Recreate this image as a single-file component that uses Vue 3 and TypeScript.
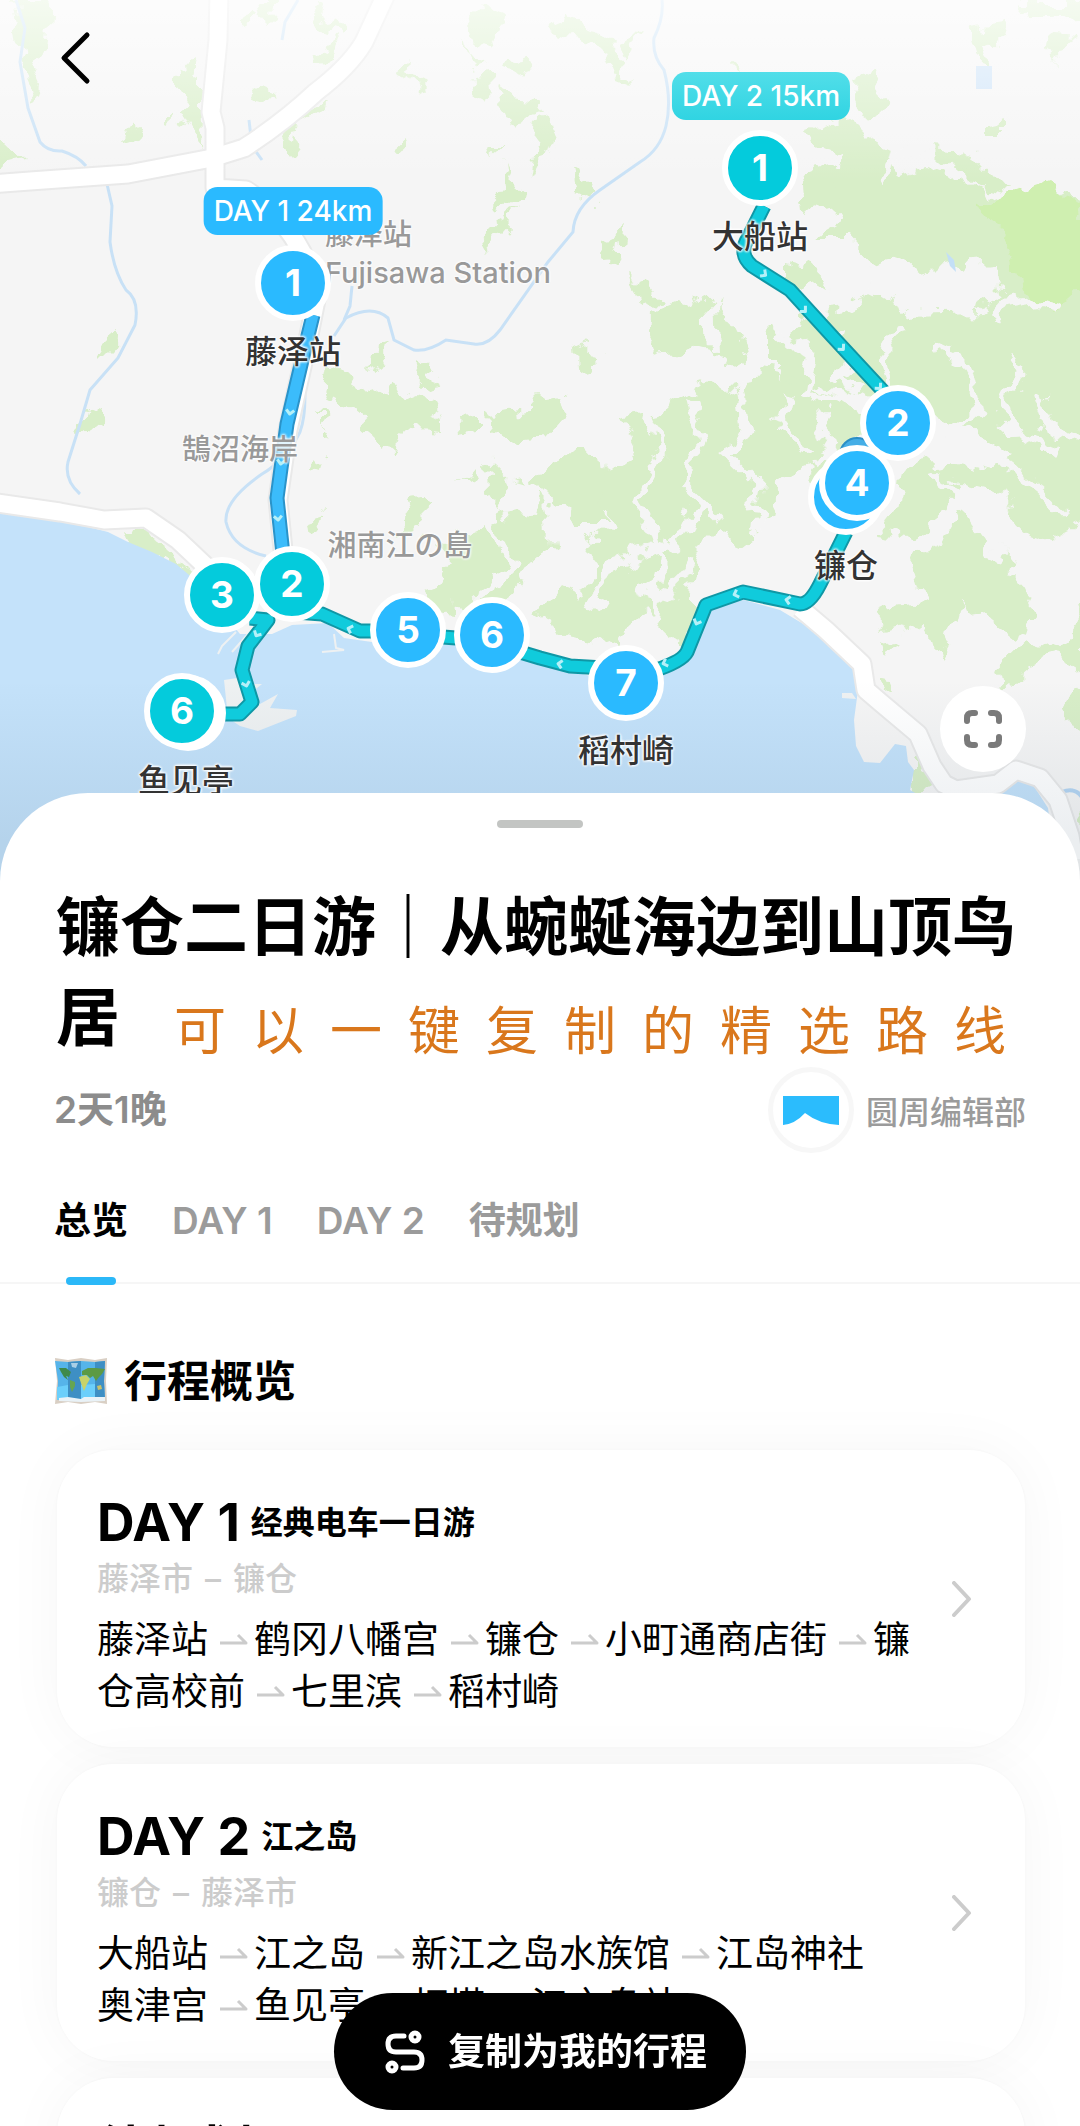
<script setup lang="ts">
import { ref } from 'vue'

type Tone = 'blue' | 'teal'

interface Pin {
  x: number
  y: number
  tone: Tone
  text?: string
  plain?: boolean
}

interface Label {
  x: number
  y: number
  text: string
}

interface Stop {
  name: string
  joined?: boolean
}

interface Day {
  title: string
  name: string
  from: string
  to: string
  stops: Stop[]
}

const MAP_W = 1080
const MAP_H = 900

const at = (x: number, y: number) => ({
  left: `${(x / MAP_W) * 100}%`,
  top: `${(y / MAP_H) * 100}%`,
})

const forests: string[] = [
  '14,0 50,0 46,50 36,74 42,88 40,105 33,108 25,72 20,45',
  '-8,130 8,146 24,160 -8,168',
  '183,66 201,70 201,110 200,147 193,138 181,118 188,110 178,88',
  '120,146 126,128 136,122 142,138 130,143',
  '240,16 255,6 262,15 250,29 240,24',
  '262,0 278,0 276,18 266,26',
  '315,0 325,15 342,28 342,36 325,30 312,12',
  '312,55 335,40 340,48 322,68 313,66',
  '257,91 268,85 277,92 265,101',
  '165,112 171,112 170,121 165,120',
  '279,130 300,133 298,148 290,157 280,142',
  '290,122 328,100 325,111 300,127',
  '388,148 402,138 406,147 396,152',
  '468,26 484,6 500,14 497,36 488,48 480,35',
  '462,40 466,58 486,60 474,66 462,54',
  '503,57 530,53 532,66 515,72 500,69',
  '474,75 488,73 489,90 485,106 478,92',
  '498,90 510,96 530,98 541,112 520,120 512,130 504,110',
  '484,144 502,144 488,156',
  '500,163 510,180 522,190 520,201 506,208 494,203 504,192',
  '400,74 410,60 408,78 426,84 428,92 404,80',
  '524,208 508,222 494,238 478,256 482,238 496,222',
  '98,345 112,332 123,332 112,352 104,360',
  '84,408 104,412 100,434 80,430',
  '325,364 345,372 372,390 384,398 396,380 405,398 425,390 440,420 440,432 412,430 384,452 372,430 350,412 332,398 320,392',
  '374,352 388,347 372,374',
  '410,357 424,370 442,382 424,385 414,374',
  '462,418 480,416 480,430 464,433',
  '490,415 540,410 545,436 510,440 492,428',
  '310,460 326,465 325,472 312,470',
  '320,410 326,414 320,432 328,436 320,440',
  '308,520 326,514 320,530 310,536',
  '460,486 474,470 476,478',
  '484,462 504,480 526,478 548,500 552,548 530,562 505,600 486,612 444,606 420,592 436,586 452,562 436,544 468,532 502,516 508,502 486,492',
  '400,520 412,500 425,498 424,530 402,540',
  '124,528 150,540 168,552 192,572 184,576 158,560 130,546',
  '566,20 576,12 584,30 602,34 612,45 620,60 629,82 614,76 604,50 574,38 548,34 552,26',
  '620,46 640,30 634,48 626,60',
  '570,170 590,180 600,196 590,202 574,196',
  '538,118 550,116 558,148 540,160 530,180',
  '603,240 625,228 622,246 612,264 602,256',
  '655,308 675,300 700,306 715,298 730,320 738,336 746,366 714,352 690,346 660,355 654,334',
  '634,278 648,284 662,300 642,306',
  '577,350 588,345 600,360 578,367',
  '735,60 742,66 736,70',
  '968,26 1012,20 1006,40 986,46 992,66 974,60',
  '1050,34 1072,36 1066,54 1056,66 1048,50',
  '1020,0 1080,0 1078,24 1062,10 1030,12',
  '850,86 872,74 888,98 882,112 866,118',
  '992,124 1002,122 1002,132 992,132',
  '806,132 846,118 868,140 886,148 898,178 930,170 972,186 1000,202 1048,184 1090,204 1090,440 1030,470 970,430 900,410 850,392 790,380 772,370 772,338 800,318 846,312 876,296 874,262 850,236 812,236 844,218 846,208 820,212 800,204 814,172 838,170 840,152 812,146',
  '782,262 812,270 826,286 800,290 782,276',
  '802,178 836,166 838,202 804,216',
  '928,146 950,148 978,158 1006,190 974,186 946,164',
  '620,418 660,410 690,390 716,382 738,398 760,372 800,380 840,400 870,420 850,450 838,470 846,500 818,500 806,470 780,480 770,520 744,540 720,530 700,550 690,600 712,620 690,640 664,630 640,606 616,650 600,640 560,630 540,616 560,590 580,600 600,570 588,540 612,520 594,500 602,470 640,460',
  '530,400 560,396 566,420 548,440 530,420',
  '536,480 560,450 600,452 606,520 570,520 556,500',
  '905,470 950,462 990,470 1030,440 1080,430 1090,520 1050,540 1020,530 1000,490 960,480 950,510 910,540 880,536 900,510',
  '910,556 938,544 958,510 990,540 1020,580 1040,620 1010,640 960,600 950,640 938,662 926,620 900,630 876,634 890,606 924,600',
  '882,646 900,642 892,660',
  '876,676 892,680 896,690 880,692',
  '1030,640 1060,650 1090,610 1090,680 1060,656 1030,664 1000,690 996,670',
  '1058,704 1086,694 1090,730 1060,718',
  '914,762 932,772 936,788 914,790',
  '1076,820 1090,810 1090,880 1078,860',
]

const valleys: string[] = [
  'M868 262 L892 256 L930 270 L996 262 L1002 296 L980 312 L910 314 L870 290Z',
  'M500 478 L540 484 L536 520 L512 518Z',
]

const valleyLines: string[] = [
  'M780 330 L812 356 L806 392 L838 402',
  'M838 330 L852 350 L838 378 L860 392',
  'M900 330 L884 352 L892 396 L920 432',
  'M932 344 L966 360 L978 410 L952 434',
  'M1010 356 L1020 372 L1000 412 L1030 440 L1060 452',
  'M990 318 L1000 306 L1040 300 L1060 306',
  'M712 300 L714 350',
  'M880 176 L910 152 L924 146',
  'M640 400 L660 450 L640 500 L660 560 L650 640',
  'M690 400 L700 440 L680 480 L720 520',
  'M740 390 L746 430 L730 460 L760 490 L756 530',
  'M790 390 L780 430 L806 450',
  'M590 610 L620 560 L680 540 L700 500',
  'M640 590 L670 600 L690 560',
  'M1000 460 L1040 490 L1070 520',
  'M940 470 L960 500 L1000 560',
  'M820 410 L830 440 L812 470',
  'M490 520 L510 570 L476 596',
  'M1040 400 L1050 430 L1080 440',
]

const rivers: string[] = [
  'M16 0 L25 28 L20 62 L28 108 L40 142 Q48 152 62 151 Q78 156 86 166',
  'M107 184 L112 206 L110 242 Q114 272 126 290 Q140 300 135 325 L118 358 L90 390 L80 424 L68 462 Q64 480 80 494',
  'M662 0 Q664 18 654 38 Q652 56 664 70 Q672 100 666 126 Q660 150 640 162 L600 190 Q574 208 573 232 L548 262 L500 330 Q488 346 474 344 L446 340 Q428 352 414 350 L394 340 L388 318 Q372 304 346 318 L334 336',
  'M352 286 L350 306 L344 320',
  'M303 370 Q308 410 300 432 Q286 460 262 474 Q224 500 226 522 Q232 548 266 556',
  'M298 0 L285 22 L282 40',
  'M249 120 L252 146 L262 160',
]

const roads: string[] = [
  'M-10 184 L30 181 L128 174 L212 158 L244 148 Q284 122 316 92 Q350 66 364 42 L388 -10',
  'M219 -10 L218 40 L211 112 L215 128 L215 188 L246 190 Q280 212 302 252 L318 290 L308 340 L288 430 L278 500 L284 560',
  'M-10 502 L60 512 L104 520 L146 518 L178 540 L214 574 L300 600',
  'M800 608 L826 630 L862 664 L866 690 L880 702 L918 734 L932 766 L944 784 L956 790 L998 784 L1016 770 L1040 778 L1058 800 L1070 836 L1074 860',
]

const dayOneRoute = 'M313 315 L304 352 L287 424 L277 498 L284 564'
const dayTwoRoutes: string[] = [
  'M764 206 L748 238 Q738 254 752 266 L790 290 L832 336 L884 392',
  'M846 532 L820 584 Q810 604 800 604 L743 592 L706 605 L687 652 Q682 662 650 672',
  'M604 668 L570 666 L540 658 L500 646',
  'M456 638 L430 636',
  'M402 631 L360 631 L322 614 L296 612',
  'M250 618 L268 620 L248 646 L242 670 L252 702 L240 714 L222 714',
]

const routeTicks = [
  { x: 290, y: 412, r: 98 },
  { x: 281, y: 462, r: 98 },
  { x: 278, y: 518, r: 85 },
  { x: 764, y: 274, r: 36 },
  { x: 804, y: 310, r: 45 },
  { x: 842, y: 348, r: 47 },
  { x: 879, y: 387, r: 47 },
  { x: 788, y: 600, r: 190 },
  { x: 736, y: 594, r: 160 },
  { x: 697, y: 622, r: 112 },
  { x: 665, y: 663, r: 160 },
  { x: 560, y: 664, r: 190 },
  { x: 350, y: 629, r: 200 },
  { x: 257, y: 634, r: 120 },
  { x: 246, y: 684, r: 75 },
]

const pins: Pin[] = [
  { x: 293, y: 283, tone: 'blue', text: '1' },
  { x: 760, y: 168, tone: 'teal', text: '1' },
  { x: 846, y: 497, tone: 'blue' },
  { x: 857, y: 483, tone: 'blue', text: '4' },
  { x: 898, y: 423, tone: 'blue', text: '2' },
  { x: 222, y: 595, tone: 'teal', text: '3' },
  { x: 292, y: 584, tone: 'teal', text: '2' },
  { x: 408, y: 630, tone: 'blue', text: '5' },
  { x: 492, y: 635, tone: 'blue', text: '6' },
  { x: 626, y: 683, tone: 'blue', text: '7' },
  { x: 188, y: 713, tone: 'teal', plain: true },
  { x: 182, y: 711, tone: 'teal', text: '6' },
]

const placeLabels: Label[] = [
  { x: 293, y: 352, text: '藤泽站' },
  { x: 760, y: 237, text: '大船站' },
  { x: 846, y: 566, text: '镰仓' },
  { x: 626, y: 751, text: '稻村崎' },
  { x: 186, y: 781, text: '鱼见亭' },
]

const baseLabels: Label[] = [
  { x: 240, y: 450, text: '鵠沼海岸' },
  { x: 400, y: 546, text: '湘南江の島' },
]

const distances = [
  { x: 293, y: 211, tone: 'blue' as Tone, text: 'DAY 1 24km' },
  { x: 761, y: 96, tone: 'teal' as Tone, text: 'DAY 2 15km' },
]

const note = Array.from('可以一键复制的精选路线')

const tabs = ['总览', 'DAY 1', 'DAY 2', '待规划']
const activeTab = ref('总览')

const days: Day[] = [
  {
    title: 'DAY 1',
    name: '经典电车一日游',
    from: '藤泽市',
    to: '镰仓',
    stops: [
      { name: '藤泽站' },
      { name: '鹤冈八幡宫' },
      { name: '镰仓' },
      { name: '小町通商店街' },
      { name: '镰仓高校前' },
      { name: '七里滨' },
      { name: '稻村崎' },
    ],
  },
  {
    title: 'DAY 2',
    name: '江之岛',
    from: '镰仓',
    to: '藤泽市',
    stops: [
      { name: '大船站' },
      { name: '江之岛' },
      { name: '新江之岛水族馆' },
      { name: '江岛神社' },
      { name: '奥津宫', joined: true },
      { name: '鱼见亭' },
      { name: '灯塔' },
      { name: '江之岛站' },
    ],
  },
  { title: '待规划', name: '', from: '镰仓', to: '藤泽市', stops: [{ name: '大船站' }] },
]
</script>

<template>
  <div class="app">
    <section class="map" aria-label="路线地图">
      <svg class="map-art" viewBox="0 0 1080 900" preserveAspectRatio="xMidYMin slice" aria-hidden="true">
        <defs>
          <filter id="rough" x="-5%" y="-5%" width="110%" height="110%">
            <feTurbulence type="fractalNoise" baseFrequency="0.045" numOctaves="3" seed="11" />
            <feDisplacementMap in="SourceGraphic" scale="30" xChannelSelector="R" yChannelSelector="G" />
          </filter>
          <linearGradient id="fade" x1="0" y1="0" x2="0" y2="1">
            <stop offset="0" stop-color="#fff" stop-opacity="0.75" />
            <stop offset="1" stop-color="#fff" stop-opacity="0" />
          </linearGradient>
          <linearGradient id="shade" x1="0" y1="0" x2="0" y2="1">
            <stop offset="0" stop-color="#1d3d5c" stop-opacity="0" />
            <stop offset="1" stop-color="#1d3d5c" stop-opacity="0.09" />
          </linearGradient>
        </defs>

        <rect width="1080" height="900" fill="#f5f5f5" />

        <g filter="url(#rough)">
          <polygon v-for="(p, i) in forests" :key="i" :points="p" fill="#d8eec8" />
          <path d="M984 204 L1048 182 L1084 206 L1090 280 L1056 310 L1020 286 L1010 246Z" fill="#cfefb0" />
          <path v-for="(d, i) in valleys" :key="i" :d="d" fill="#f5f5f5" />
          <path v-for="(d, i) in valleyLines" :key="i" :d="d" fill="none" stroke="#f5f5f5" stroke-width="8" />
        </g>

        <rect x="976" y="66" width="16" height="23" fill="#cfe4f8" />
        <path d="M946 252 l8 8 l2 12 l-6 -6z" fill="#c3dff6" />
        <path v-for="(d, i) in rivers" :key="i" :d="d" fill="none" stroke="#c8e1f6" stroke-width="3" />

        <path
          fill="#c4e2fa"
          d="M-4 512 L60 520 L108 532 L120 538 L128 542 L152 552 L176 564 L200 584 L240 634 L272 634 L292 625 L328 623 L344 638 L372 642 L440 640 L500 650 L540 662 L590 676 L650 676 L684 662 L698 640 L704 614 L720 604 L744 600 L780 610 L800 622 L824 636 L852 666 L858 690 L854 720 L856 746 L864 762 L880 763 L895 744 L906 746 L908 762 L914 770 L910 790 L924 798 L960 790 L1000 782 L1016 772 L1030 780 L1048 808 L1060 900 L-4 900Z"
        />
        <path d="M1062 792 Q1076 786 1084 800 M1062 794 Q1062 808 1068 816 L1064 840" fill="none" stroke="#b5d5f2" stroke-width="4" />
        <path d="M842 693 l10 0 l4 6 l-14 -1z" fill="#eef1f2" />
        <path d="M224 680 L244 677 L250 684 L262 684 L252 692 L260 704 L278 694 L270 708 L297 710 L296 716 L258 731 L240 726 L228 718Z" fill="#eef1f2" />
        <path d="M236 632 l-14 14 l-4 8 M248 634 l-16 18 M334 634 l2 14 l8 2 l-22 2" fill="none" stroke="#eef1f2" stroke-width="2" />

        <path v-for="(d, i) in roads" :key="`c${i}`" :d="d" fill="none" stroke="#e9e9e9" stroke-width="21" stroke-linejoin="round" />
        <path v-for="(d, i) in roads" :key="`r${i}`" :d="d" fill="none" stroke="#fff" stroke-width="17" stroke-linejoin="round" />

        <rect width="1080" height="180" fill="url(#fade)" />
        <rect y="680" width="1080" height="160" fill="url(#shade)" />
        <rect y="840" width="1080" height="60" fill="#1d3d5c" fill-opacity="0.09" />

        <circle cx="857" cy="455" r="17" fill="#45aee6" stroke="#2b8fc6" stroke-width="2" />
        <g fill="none" stroke-linejoin="round">
          <path :d="dayOneRoute" stroke="#2a93c9" stroke-width="15" />
          <path :d="dayOneRoute" stroke="#3bbcfb" stroke-width="11" />
          <path v-for="(d, i) in dayTwoRoutes" :key="`b${i}`" :d="d" stroke="#0f97a5" stroke-width="15" />
          <path v-for="(d, i) in dayTwoRoutes" :key="`f${i}`" :d="d" stroke="#10cbdc" stroke-width="11" />
          <path
            v-for="(t, i) in routeTicks"
            :key="`t${i}`"
            d="M-2 -4 L2 0 L-2 4"
            :transform="`translate(${t.x} ${t.y}) rotate(${t.r})`"
            stroke="#b5f0f8"
            stroke-width="3"
          />
        </g>
      </svg>

      <span class="base-label station" :style="at(325, 254)">藤泽站<br />Fujisawa Station</span>
      <span v-for="l in baseLabels" :key="l.text" class="base-label centered" :style="at(l.x, l.y)">{{ l.text }}</span>
      <span v-for="l in placeLabels" :key="l.text" class="place-label centered" :style="at(l.x, l.y)">{{ l.text }}</span>
      <span v-for="(p, i) in pins" :key="i" class="pin centered" :class="[p.tone, { plain: p.plain }]" :style="at(p.x, p.y)">{{ p.text }}</span>
      <span v-for="d in distances" :key="d.text" class="distance centered" :class="d.tone" :style="at(d.x, d.y)">{{ d.text }}</span>

      <button class="back" type="button" aria-label="返回">
        <svg width="32" height="54" viewBox="0 0 32 54" aria-hidden="true">
          <path d="M27 4 L4 27 L27 50" fill="none" stroke="#000" stroke-width="5" stroke-linecap="round" stroke-linejoin="round" />
        </svg>
      </button>
      <button class="expand centered" type="button" aria-label="展开地图" :style="at(983, 729)">
        <svg width="38" height="38" viewBox="0 0 38 38" aria-hidden="true">
          <path
            d="M3 11 V8 Q3 3 8 3 H11 M27 3 H30 Q35 3 35 8 V11 M35 27 V30 Q35 35 30 35 H27 M11 35 H8 Q3 35 3 30 V27"
            fill="none"
            stroke="#7a7a7a"
            stroke-width="6"
            stroke-linecap="round"
          />
        </svg>
      </button>
    </section>

    <main class="sheet">
      <div class="handle"></div>
      <header class="intro">
        <h1>镰仓二日游｜从蜿蜒海边到山顶鸟居</h1>
        <p class="note" aria-label="可以一键复制的精选路线"><span v-for="(c, i) in note" :key="i">{{ c }}</span></p>
      </header>

      <div class="meta">
        <span class="length">2天1晚</span>
        <a class="author" href="#">
          <span class="avatar">
            <svg width="56" height="29" viewBox="0 0 56 29" aria-hidden="true">
              <path d="M0 0 H56 V29 Q36 28 22 17 Q12 28 0 29Z" fill="#2bbcfd" />
            </svg>
          </span>
          圆周编辑部
        </a>
      </div>

      <nav class="tabs">
        <button v-for="t in tabs" :key="t" type="button" :class="{ active: t === activeTab }" @click="activeTab = t">{{ t }}</button>
      </nav>

      <h2>
        <svg width="54" height="48" viewBox="0 0 54 48" aria-hidden="true">
          <path d="M1 1 L14 3 L27 1 L41 3 L53 1 L52 24 L53 47 L41 45 L27 47 L14 45 L1 47 L3 24Z" fill="#d9cfc4" />
          <path d="M1 4 L14 5 L27 4 L41 5 L51 4 L50 24 L51 43 L41 42 L27 43 L14 42 L3 43 L4 24Z" fill="#56b4ea" />
          <path d="M14 5 L27 4 V43 L14 42Z M41 5 L51 4 L50 24 L51 43 L41 42Z" fill="#3e8fc4" />
          <path d="M3 30 L14 28 V42 L3 43Z M27 28 L41 27 V42 L27 43Z" fill="#6bcffb" />
          <path d="M17 6 L24 6 L22 11 L18 10Z" fill="#a9cfe6" />
          <path d="M5 11 L12 11 L17 15 L15 20 L12 19 L14 23 L10 20 L7 15Z" fill="#3f8a4a" />
          <path d="M16 23 L21 25 L21 29 L18 35 L16 30Z" fill="#66a552" />
          <path d="M28 14 L34 11 L42 11 L51 12 L48 17 L45 20 L42 24 L39 19 L36 21 L33 18 L28 18Z" fill="#5c9a45" />
          <path d="M25 20 L32 18 L36 22 L33 27 L30 34 L27 26Z" fill="#c8d36a" />
          <path d="M43 29 L47 28 L48 32 L44 33Z" fill="#c8c26a" />
          <path d="M5 41 L14 40 L27 42 L30 40 L51 40 V44 L27 45 L5 44Z" fill="#e9f2f7" />
        </svg>
        行程概览
      </h2>

      <div class="cards">
        <a v-for="day in days" :key="day.title" class="card" href="#">
          <div class="card-body">
            <h3>{{ day.title }} <small>{{ day.name }}</small></h3>
            <p class="area"><span>{{ day.from }}</span><span>–</span><span>{{ day.to }}</span></p>
            <p class="route">
              <template v-for="(s, i) in day.stops" :key="s.name">
                <svg v-if="i > 0 && !s.joined" class="arrow" width="28" height="12" viewBox="0 0 28 12" aria-hidden="true">
                  <path d="M0 10 H26 L18 2" fill="none" stroke="#ccc" stroke-width="3" stroke-linejoin="round" />
                </svg>
                <template v-if="s.joined">{{ ' ' }}</template>
                <span :class="{ whole: s.joined }">{{ s.name }}</span>
              </template>
            </p>
          </div>
          <svg class="chevron" width="20" height="36" viewBox="0 0 20 36" aria-hidden="true">
            <path d="M2 2 L17 18 L2 34" fill="none" stroke="#ccc" stroke-width="4" stroke-linecap="round" stroke-linejoin="round" />
          </svg>
        </a>
      </div>
    </main>

    <div class="dock">
      <button class="copy" type="button">
        <svg width="40" height="44" viewBox="0 0 40 44" aria-hidden="true">
          <g fill="none" stroke="#fff" stroke-width="5" stroke-linecap="round">
            <path d="M19 6 H11 Q3 6 3 14 Q3 22 11 22 H29 Q37 22 37 30 Q37 38 29 38 H18" />
            <circle cx="30" cy="7" r="4" />
            <circle cx="7" cy="37" r="4" />
          </g>
        </svg>
        复制为我的行程
      </button>
    </div>
  </div>
</template>

<style>
body {
  margin: 0;
  background: #fff;
}
</style>

<style scoped>
.app {
  height: 100vh;
  overflow-y: auto;
  scrollbar-width: none;
  background: #fff;
  color: #000;
  font-family: Inter, 'Noto Sans CJK SC', sans-serif;
}

h1,
h2,
h3,
p {
  margin: 0;
}

a {
  color: inherit;
  text-decoration: none;
}

button {
  border: 0;
  padding: 0;
  background: none;
  font-family: inherit;
  color: inherit;
}

.map {
  position: relative;
  aspect-ratio: 1080 / 900;
  overflow: hidden;
}

.map-art {
  display: block;
  width: 100%;
  height: 100%;
}

.map > span,
.map > button {
  position: absolute;
  white-space: nowrap;
}

.centered {
  transform: translate(-50%, -50%);
}

.base-label {
  color: #999;
  font-size: 29px;
  font-weight: 500;
  line-height: 38px;
  font-family: Inter, 'Noto Sans CJK JP', sans-serif;
  text-shadow: 0 0 3px #fff, 0 0 3px #fff, 0 0 3px #fff;
}

.station {
  transform: translateY(-50%);
}

.place-label {
  color: #333;
  font-size: 32px;
  font-weight: 500;
  line-height: 40px;
  text-shadow: 0 0 3px #fff, 0 0 3px #fff, 0 0 3px #fff, 0 0 3px #fff;
}

.pin {
  box-sizing: border-box;
  width: 76px;
  height: 76px;
  border: 6px solid #fff;
  border-radius: 50%;
  color: #fff;
  font-size: 37px;
  font-weight: 700;
  line-height: 64px;
  text-align: center;
}

.blue {
  background: #2abaff;
}

.teal {
  background: #04cbdc;
}

.pin.plain {
  background: #fff;
}

.distance {
  padding: 0 10px;
  border-radius: 14px;
  color: #fff;
  font-size: 28px;
  font-weight: 500;
  line-height: 48px;
}

.distance.teal {
  background: linear-gradient(#52dee9, #30d4e2);
}

.back {
  top: 31px;
  left: 60px;
}

.back svg,
.expand svg {
  display: block;
}

.expand {
  display: flex;
  align-items: center;
  justify-content: center;
  width: 86px;
  height: 86px;
  border-radius: 50%;
  background: #fff;
}

.sheet {
  position: relative;
  margin-top: -107px;
  padding-top: 27px;
  border-radius: 88px 88px 0 0;
  background: #fff;
}

.handle {
  width: 86px;
  height: 8px;
  margin: 0 auto;
  border-radius: 4px;
  background: #c3c5c3;
}

.intro {
  position: relative;
  margin: 54px 54px 0 56px;
}

h1 {
  font-size: 64px;
  font-weight: 600;
  line-height: 90px;
}

.note {
  position: absolute;
  right: 7px;
  bottom: 0;
  display: flex;
  color: #d9771c;
  font-size: 52px;
  font-weight: 400;
  line-height: 60px;
}

.note span {
  width: 78px;
  text-align: center;
}

.meta {
  display: flex;
  align-items: center;
  justify-content: space-between;
  margin: 5px 54px 0;
}

.length {
  color: #8c8c8c;
  font-size: 37px;
  font-weight: 600;
  line-height: 44px;
}

.author {
  display: flex;
  align-items: center;
  gap: 12px;
  color: #9b9b9b;
  font-size: 32px;
  font-weight: 500;
}

.avatar {
  display: flex;
  align-items: center;
  justify-content: center;
  width: 76px;
  height: 76px;
  border: 5px solid #f7f7f7;
  border-radius: 50%;
}

.tabs {
  display: flex;
  gap: 44px;
  padding: 0 54px;
  border-bottom: 2px solid #f6f6f6;
}

.tabs button {
  position: relative;
  padding: 46px 0 39px;
  color: #9b9b9b;
  font-size: 37px;
  font-weight: 600;
  line-height: 44px;
}

.tabs .active {
  color: #000;
}

.tabs .active::after {
  content: '';
  position: absolute;
  bottom: -3px;
  left: calc(50% - 25px);
  width: 50px;
  height: 8px;
  border-radius: 4px;
  background: #2bb8f8;
}

h2 {
  display: flex;
  align-items: center;
  gap: 16px;
  margin: 67px 54px 0;
  font-size: 43px;
  font-weight: 600;
  line-height: 60px;
}

.cards {
  display: flex;
  flex-direction: column;
  gap: 17px;
  padding: 39px 55px 160px 57px;
}

.card {
  display: flex;
  align-items: center;
  gap: 32px;
  padding: 0 53px 0 40px;
  border-radius: 56px;
  background: #fff;
  box-shadow: 0 0 60px rgba(0, 0, 0, 0.04), 0 0 3px rgba(0, 0, 0, 0.03);
}

.card-body {
  flex: 1;
  padding: 45px 0 29px;
}

h3 {
  display: flex;
  align-items: center;
  gap: 11px;
  font-size: 52px;
  font-weight: 700;
  line-height: 56px;
}

h3 small {
  font-size: 32px;
  font-weight: 600;
}

.area {
  display: flex;
  gap: 12px;
  margin-top: 8px;
  color: #ccc;
  font-size: 32px;
  font-weight: 500;
  line-height: 40px;
}

.route {
  margin-top: 15px;
  font-size: 37px;
  font-weight: 400;
  line-height: 52px;
}

.route .whole {
  white-space: nowrap;
}

.arrow {
  margin: 0 6px 0 12px;
  vertical-align: 8px;
}

.dock {
  position: fixed;
  right: 0;
  bottom: 16px;
  left: 0;
  display: flex;
  justify-content: center;
}

.copy {
  display: flex;
  align-items: center;
  gap: 23px;
  padding: 0 39px 0 51px;
  border-radius: 59px;
  background: #000;
  color: #fff;
  font-size: 37px;
  font-weight: 600;
  line-height: 117px;
}
</style>
